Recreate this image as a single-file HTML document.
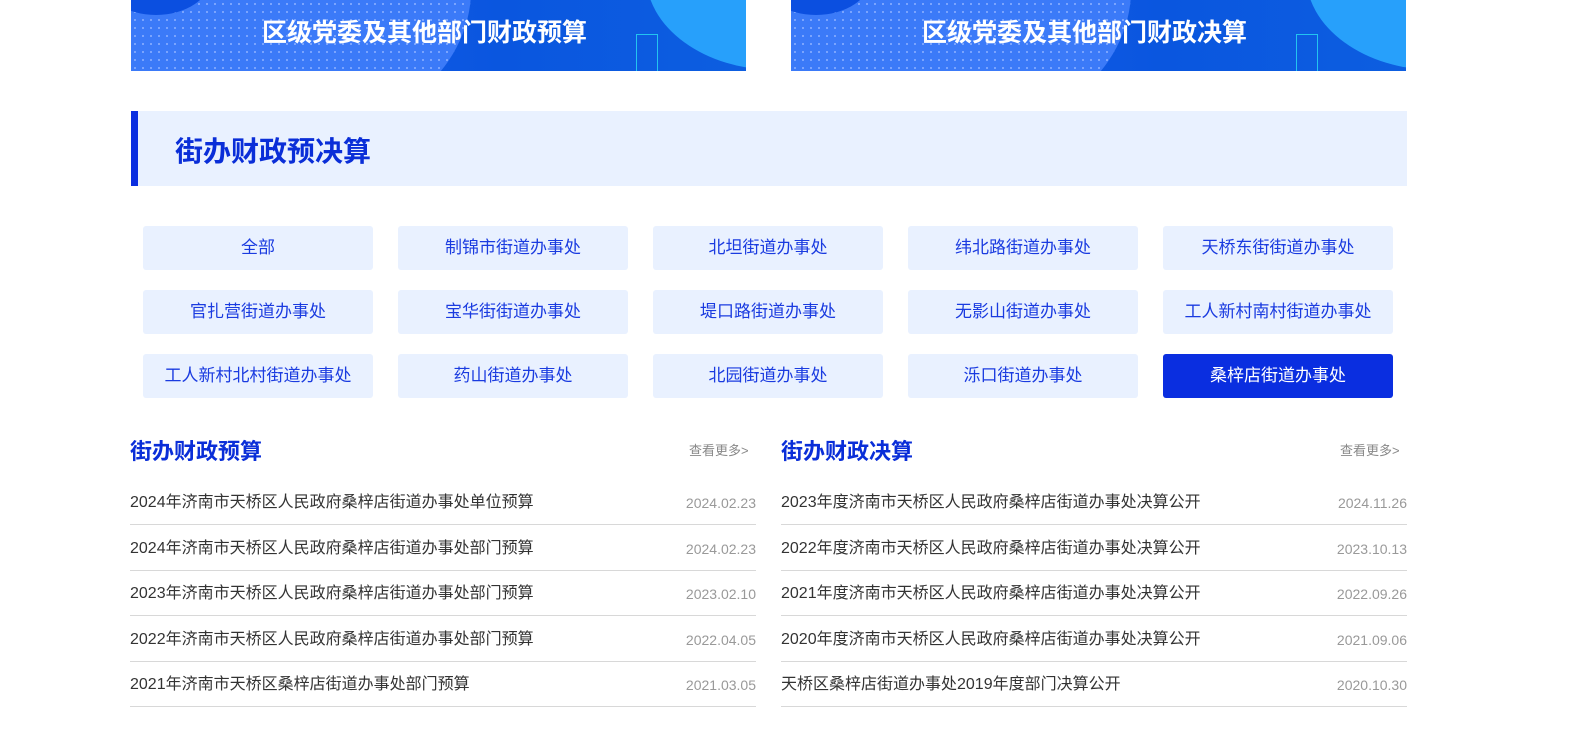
<!DOCTYPE html>
<html><head><meta charset="utf-8"><style>
*{margin:0;padding:0;box-sizing:border-box}
body{width:1585px;height:736px;background:#fff;position:relative;overflow:hidden;font-family:"Liberation Sans","Noto Sans CJK SC",sans-serif}
.ban{position:absolute;top:0;width:615px;height:71px;overflow:hidden;background:linear-gradient(90deg,#1d5ff0,#0a56df 60%,#0d5ee0)}
.ban .c1{position:absolute;left:-40px;top:-160px;width:380px;height:300px;border-radius:50%;background:#3b7af8;background-image:radial-gradient(#7fa8ff 1px,transparent 1.2px);background-size:8px 8px}
.ban .c0{position:absolute;left:-30px;top:-60px;width:110px;height:75px;border-radius:50%;background:#0b4fe0}
.ban .c2{position:absolute;left:515px;top:-120px;width:260px;height:190px;border-radius:50%;background:#27a0fb}
.ban .r{position:absolute;left:505px;top:34px;width:22px;height:40px;border:1px solid #22c4f0}
.ban span{position:absolute;left:131px;top:13px;color:#fff;font-size:25px;font-weight:bold;white-space:nowrap}
.hd{position:absolute;left:131px;top:111px;width:1276px;height:75px;background:#e9f1ff;border-left:7px solid #0a2ee0}
.hd span{position:absolute;left:37px;top:19px;font-size:28px;font-weight:bold;color:#0a2ed8}
.b{position:absolute;width:230px;height:44px;background:#e9f1ff;border-radius:3px;color:#1a3be0;font-size:17px;text-align:center;line-height:44px}
.b.a{background:#0a2ee0;color:#fff}
.lt{position:absolute;font-size:22px;font-weight:bold;color:#0a2ed8;top:434px}
.more{position:absolute;top:440px;font-size:13px;color:#888}
.row{position:absolute;width:626px;height:46px;border-bottom:1px solid #d8d8d8;font-size:16px;color:#333;line-height:48px}
.row i{font-style:normal;position:absolute;right:0;top:0;color:#999;font-size:14px}
</style></head><body>
<div class="ban" style="left:131px"><div class="c1"></div><div class="c0"></div><div class="c2"></div><div class="r"></div><span>区级党委及其他部门财政预算</span></div>
<div class="ban" style="left:791px"><div class="c1"></div><div class="c0"></div><div class="c2"></div><div class="r"></div><span>区级党委及其他部门财政决算</span></div>
<div class="hd"><span>街办财政预决算</span></div>
<div class="b" style="left:143px;top:226px">全部</div>
<div class="b" style="left:398px;top:226px">制锦市街道办事处</div>
<div class="b" style="left:653px;top:226px">北坦街道办事处</div>
<div class="b" style="left:908px;top:226px">纬北路街道办事处</div>
<div class="b" style="left:1163px;top:226px">天桥东街街道办事处</div>
<div class="b" style="left:143px;top:290px">官扎营街道办事处</div>
<div class="b" style="left:398px;top:290px">宝华街街道办事处</div>
<div class="b" style="left:653px;top:290px">堤口路街道办事处</div>
<div class="b" style="left:908px;top:290px">无影山街道办事处</div>
<div class="b" style="left:1163px;top:290px">工人新村南村街道办事处</div>
<div class="b" style="left:143px;top:354px">工人新村北村街道办事处</div>
<div class="b" style="left:398px;top:354px">药山街道办事处</div>
<div class="b" style="left:653px;top:354px">北园街道办事处</div>
<div class="b" style="left:908px;top:354px">泺口街道办事处</div>
<div class="b a" style="left:1163px;top:354px">桑梓店街道办事处</div>
<div class="lt" style="left:130px">街办财政预算</div>
<div class="more" style="left:689px">查看更多&gt;</div>
<div class="lt" style="left:781px">街办财政决算</div>
<div class="more" style="left:1340px">查看更多&gt;</div>
<div class="row" style="left:130px;top:479px">2024年济南市天桥区人民政府桑梓店街道办事处单位预算<i>2024.02.23</i></div>
<div class="row" style="left:130px;top:525px">2024年济南市天桥区人民政府桑梓店街道办事处部门预算<i>2024.02.23</i></div>
<div class="row" style="left:130px;top:570px">2023年济南市天桥区人民政府桑梓店街道办事处部门预算<i>2023.02.10</i></div>
<div class="row" style="left:130px;top:616px">2022年济南市天桥区人民政府桑梓店街道办事处部门预算<i>2022.04.05</i></div>
<div class="row" style="left:130px;top:661px">2021年济南市天桥区桑梓店街道办事处部门预算<i>2021.03.05</i></div>
<div class="row" style="left:781px;top:479px">2023年度济南市天桥区人民政府桑梓店街道办事处决算公开<i>2024.11.26</i></div>
<div class="row" style="left:781px;top:525px">2022年度济南市天桥区人民政府桑梓店街道办事处决算公开<i>2023.10.13</i></div>
<div class="row" style="left:781px;top:570px">2021年度济南市天桥区人民政府桑梓店街道办事处决算公开<i>2022.09.26</i></div>
<div class="row" style="left:781px;top:616px">2020年度济南市天桥区人民政府桑梓店街道办事处决算公开<i>2021.09.06</i></div>
<div class="row" style="left:781px;top:661px">天桥区桑梓店街道办事处2019年度部门决算公开<i>2020.10.30</i></div>
</body></html>
